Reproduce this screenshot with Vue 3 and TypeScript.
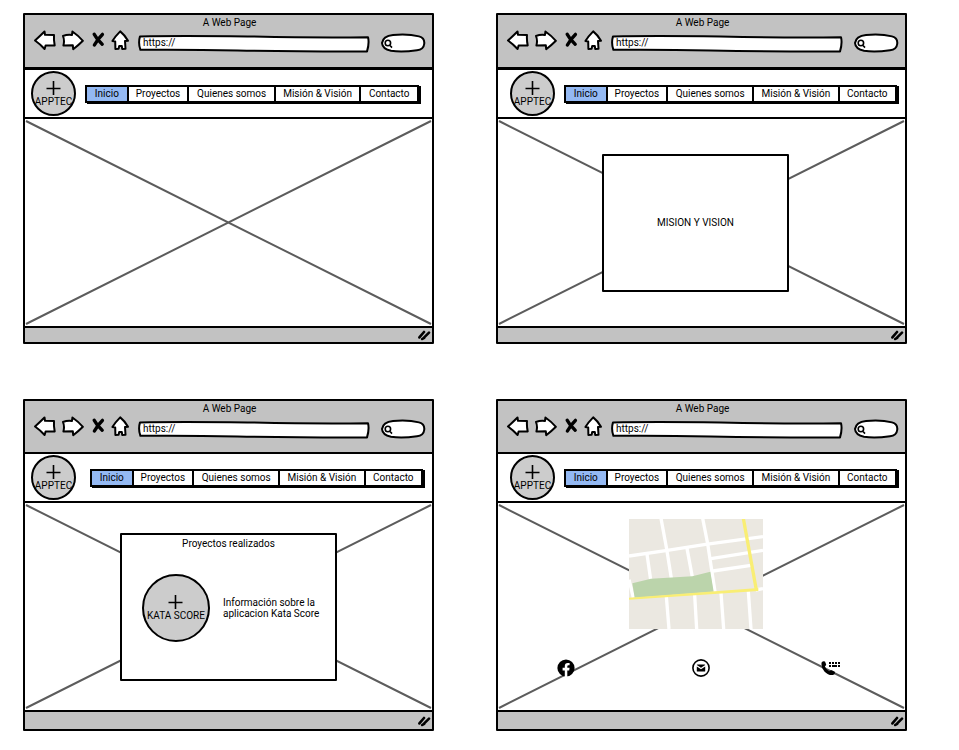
<script setup lang="ts">
type Screen = 'home' | 'mission' | 'projects' | 'contact'

const screens: Screen[] = ['home', 'mission', 'projects', 'contact']
const menu: string[] = ['Inicio', 'Proyectos', 'Quienes somos', 'Misión & Visión', 'Contacto']
</script>

<template>
  <main class="board">
    <section v-for="screen in screens" :key="screen" class="window" :class="screen">
      <header class="chrome">
        <h2 class="title">A Web Page</h2>
        <div class="toolbar">
          <button class="tool arrow" type="button" aria-label="Back">
            <svg width="24" height="24" viewBox="0 0 24 24">
              <path class="ink" d="M2 10.5 Q7 6 11.5 1.5 L12 4.8 L21 5 Q20.6 10 21.7 15.5 L12.6 15.4 L11.6 19 Q7 14 2 10.5Z" />
            </svg>
          </button>
          <button class="tool arrow" type="button" aria-label="Forward">
            <svg width="24" height="24" viewBox="0 0 24 24">
              <path class="ink" d="M1 6 Q5.2 4.4 10 5 L10.4 1.5 Q16.2 5.5 20.9 10.8 Q16.2 15.5 11.2 19.2 L10.8 15.2 L1.4 15.4 Q2.8 10.5 1 6Z" />
            </svg>
          </button>
          <button class="tool stop" type="button" aria-label="Stop">
            <svg width="15" height="24" viewBox="0 0 15 24">
              <path class="cross" d="M3.2 4.2 Q6 9.6 11.2 14.2 M11.4 4.4 Q7 8.5 3.4 15" />
            </svg>
          </button>
          <button class="tool house" type="button" aria-label="Home">
            <svg width="20" height="24" viewBox="0 0 20 24">
              <path class="ink" d="M9.2 1.4 Q4.6 6 1.4 11 L4.2 11.4 L4.4 19 L7.6 18.8 L8.2 16 L10.8 16 L11.2 18.9 L14.5 18.7 L14 11 L17 10.8 Q13.7 5 9.2 1.4Z" />
            </svg>
          </button>
          <label class="field url">
            <svg class="shape" viewBox="0 0 233 24" preserveAspectRatio="none">
              <path class="ink" d="M2 7.4 Q40 6.6 110 7.4 Q180 9 231 8.2 Q232.5 14 230 22.4 Q160 22.6 100 21.4 Q50 20.4 2.4 20.8 Q0 14 2 7.4Z" />
            </svg>
            <input type="text" value="https://" aria-label="Address" />
          </label>
          <label class="field search">
            <svg class="shape" viewBox="0 0 46 24" preserveAspectRatio="none">
              <path class="ink" d="M2 13 Q3 6 13 5 Q28 3.6 39 6.4 Q45 8 44.2 14 Q43.6 19.6 37 20.2 Q22 22.6 11 20.8 Q2.4 19 2 13Z" />
              <path class="lens" d="M10.6 13 A2.7 2.7 0 1 1 5.2 13 A2.7 2.7 0 1 1 10.6 13 M9.6 15 L12 17.6" />
            </svg>
            <input type="text" aria-label="Search" />
          </label>
        </div>
      </header>

      <div class="bar">
        <div class="badge small">
          <svg class="plus" width="16" height="16" viewBox="0 0 16 16"><path d="M7.5 1 V15 M0.5 8.5 H14.5" /></svg>
          <span>APPTEC</span>
        </div>
        <nav class="menu">
          <a v-for="(item, i) in menu" :key="item" href="#" :class="{ active: i === 0 }">{{ item }}</a>
        </nav>
      </div>

      <div class="hero">
        <svg class="diagonals" viewBox="0 0 407 207" preserveAspectRatio="none">
          <path d="M1 2 L406 205 M1 205 L406 2" />
        </svg>

        <div v-if="screen === 'mission'" class="card mission-card">MISION Y VISION</div>

        <article v-if="screen === 'projects'" class="card project-card">
          <h3>Proyectos realizados</h3>
          <div class="project">
            <div class="badge large">
              <svg class="plus" width="16" height="16" viewBox="0 0 16 16"><path d="M7.5 1 V15 M0.5 8.5 H14.5" /></svg>
              <span>KATA SCORE</span>
            </div>
            <p>Información sobre la<br />aplicacion Kata Score</p>
          </div>
        </article>

        <div v-if="screen === 'contact'" class="contact-body">
          <svg class="map" width="134" height="110" viewBox="0 0 402 330" role="img" aria-label="Map">
            <rect width="402" height="330" fill="#ebe8e1" />
            <g fill="none" stroke="#fff" stroke-width="10">
              <path d="M0 111 L115 94 L230 76 L402 53" />
              <path d="M96 -2 L113 90 L127 178" />
              <path d="M221 -2 L236 74 L258 218" />
              <path d="M54 106 L65 182 M174 88 L190 174" />
              <path d="M246 119 L402 94 M252 156 L366 139" />
              <path d="M0 182 L13 236" />
              <path d="M380 213 L402 209" />
              <path d="M112 232 L120 330 M197 228 L203 330 M276 222 L284 330 M358 217 L366 330" />
            </g>
            <path d="M10 193 L66 179 L190 172 L244 158 L254 218 L17 236Z" fill="#bbd4ab" />
            <path d="M0 236 L388 207 L388 216 L0 242Z" fill="#f9ee74" />
            <path d="M343 -2 L382 213" fill="none" stroke="#f9ee74" stroke-width="10" />
          </svg>
          <div class="links">
            <a href="#" aria-label="Facebook">
              <svg width="18" height="18" viewBox="0 0 18 18">
                <circle cx="9" cy="9" r="8.6" />
                <path d="M7.8 18 V11.4 H5.6 V8.8 H7.8 V7 Q7.8 3.9 10.8 3.9 L12.6 4.1 V6.2 H11.5 Q10.3 6.2 10.3 7.4 V8.8 H12.6 L12.2 11.4 H10.3 V18Z" fill="#fff" />
              </svg>
            </a>
            <a href="#" aria-label="Correo">
              <svg width="18" height="18" viewBox="0 0 18 18">
                <circle cx="9" cy="9" r="8.1" fill="#fff" stroke="#000" stroke-width="1.6" />
                <path d="M4.8 6 Q4.8 5.4 5.4 5.4 H12.6 Q13.2 5.4 13.2 6 L9 8.8Z" />
                <path d="M4.8 7.4 L9 10.2 L13.2 7.4 V12 Q13.2 12.6 12.6 12.6 H5.4 Q4.8 12.6 4.8 12Z" />
              </svg>
            </a>
            <a href="#" aria-label="Teléfono">
              <svg width="20" height="18" viewBox="0 0 20 18">
                <path d="M0.6 3.6 Q1.8 1.6 4 2.4 L5.2 5.4 Q5 6.6 3.9 7.4 Q5 10.4 8.2 12.2 Q9.6 10.9 10.8 11.2 L13.8 12.8 Q14.4 15 12 16 Q7.4 16.6 3.4 12.4 Q-0.2 8 0.6 3.6Z" />
                <path d="M8 3 h2 v2 h-2z M11 3 h2 v2 h-2z M14 3 h2 v2 h-2z M17 3 h2 v2 h-2z M8 6 h2 v2 h-2z M11 6 h5 v2 h-5z M17 6 h2 v2 h-2z" />
              </svg>
            </a>
          </div>
        </div>
      </div>

      <footer class="status">
        <svg width="14" height="12" viewBox="0 0 14 12">
          <path d="M1.4 8.4 L6 3 M4.2 10 L6.2 8.8 M5 9.6 L11 3.6" />
        </svg>
      </footer>
    </section>
  </main>
</template>

<style>
body {
  margin: 0;
  background: #fff;
}
</style>

<style scoped>
.board {
  display: grid;
  grid-template-columns: 1fr 1fr;
  align-items: start;
  gap: 55px 62px;
  padding: 13px 52px 19px 23px;
  font: 10px/12px Roboto, "Liberation Sans", sans-serif;
  color: #000;
}

.window {
  display: flex;
  flex-direction: column;
  border: 2px solid #000;
  border-radius: 1px;
}

.chrome {
  padding: 1px 6px 13px 8px;
  background: #c2c2c2;
  border-bottom: 3px solid #000;
}

.title {
  margin: 0;
  font-size: 10px;
  font-weight: 400;
  line-height: 14px;
  text-align: center;
}

.toolbar {
  display: flex;
  gap: 5px;
  height: 24px;
}

.tool {
  display: flex;
  flex: none;
  padding: 0;
  border: 0;
  background: none;
}

.ink {
  fill: #fff;
  stroke: #000;
  stroke-width: 2;
  stroke-linejoin: round;
  vector-effect: non-scaling-stroke;
}

.cross {
  fill: none;
  stroke: #000;
  stroke-width: 3.4;
  stroke-linecap: round;
}

.lens {
  fill: none;
  stroke: #000;
  stroke-width: 1.6;
}

.field {
  position: relative;
  display: flex;
  align-items: center;
}

.shape {
  position: absolute;
  inset: 0;
  width: 100%;
  height: 100%;
}

.field input {
  position: relative;
  box-sizing: border-box;
  width: 100%;
  height: 14px;
  padding: 0 5px;
  border: 0;
  outline: 0;
  background: none;
  font: inherit;
  color: inherit;
}

.url {
  flex: 1;
  margin-left: 2px;
}

.url .shape {
  top: -1px;
}

.search {
  flex: none;
  width: 46px;
  margin-left: 5px;
}

.search input {
  padding-left: 14px;
}

.bar {
  display: flex;
  align-items: center;
  gap: 9px;
  height: 47px;
  padding: 0 13px 0 6px;
  border-bottom: 2px solid #000;
}

.badge {
  display: flex;
  flex: none;
  flex-direction: column;
  align-items: center;
  box-sizing: border-box;
  border: 2px solid #000;
  border-radius: 50%;
  background: #ccc;
  white-space: nowrap;
}

.badge span {
  line-height: 11px;
}

.small {
  width: 45px;
  height: 45px;
  padding-top: 7px;
}

.large {
  width: 68px;
  height: 68px;
  padding-top: 18px;
}

.plus {
  fill: none;
  stroke: #000;
  stroke-width: 1.6;
}

.menu {
  display: grid;
  flex: 1;
  grid-template-columns: 42fr 61fr 87fr 86fr 58fr;
  box-sizing: border-box;
  height: 18px;
  border: solid #000;
  border-width: 2px 0 2px 2px;
  box-shadow: 2px 1px 0 #000;
}

.menu a {
  border-right: 2px solid #000;
  background: #fff;
  color: inherit;
  line-height: 14px;
  text-align: center;
  text-decoration: none;
  white-space: nowrap;
}

.menu .active {
  background: #94b9f3;
}

.hero {
  position: relative;
  display: flex;
  align-items: center;
  justify-content: center;
  min-height: 207px;
}

.diagonals {
  position: absolute;
  inset: 0;
  width: 100%;
  height: 100%;
  fill: none;
  stroke: #5c5c5c;
  stroke-width: 2;
}

.card {
  position: relative;
  box-sizing: border-box;
  border: 2px solid #000;
  border-radius: 1px;
  background: #fff;
}

.mission-card {
  padding: 61px 53px;
  margin-right: 12px;
  white-space: nowrap;
}

.project-card {
  width: 217px;
  padding: 3px 14px 37px 20px;
}

.project-card h3 {
  margin: 0 6px 24px 0;
  font-size: 10px;
  font-weight: 400;
  line-height: 12px;
  text-align: center;
}

.project {
  display: flex;
  align-items: center;
  gap: 13px;
}

.project p {
  margin: 0;
  line-height: 11px;
  white-space: nowrap;
}

.contact-body {
  position: relative;
  display: flex;
  flex: 1;
  flex-direction: column;
  align-self: flex-start;
  align-items: center;
  gap: 30px;
  padding-top: 16px;
}

.map {
  margin-right: 12px;
}

.links {
  display: grid;
  grid-template-columns: 1fr 1fr 1fr;
  align-self: stretch;
  justify-items: center;
}

.links a {
  display: flex;
  color: #000;
}

.links a:last-child {
  padding-right: 12px;
}

.status {
  display: flex;
  align-items: center;
  justify-content: flex-end;
  height: 14px;
  border-top: 2px solid #000;
  background: #c2c2c2;
}

.status svg {
  fill: none;
  stroke: #000;
  stroke-width: 2.6;
  stroke-linecap: round;
}

.mission .bar,
.contact .bar {
  padding: 0 8px 0 12px;
}

.projects .bar {
  gap: 14px;
  padding-right: 9px;
}

.projects .chrome,
.contact .chrome {
  padding-bottom: 12px;
  border-bottom-width: 2px;
}

.projects .status,
.contact .status {
  height: 17px;
}
</style>
